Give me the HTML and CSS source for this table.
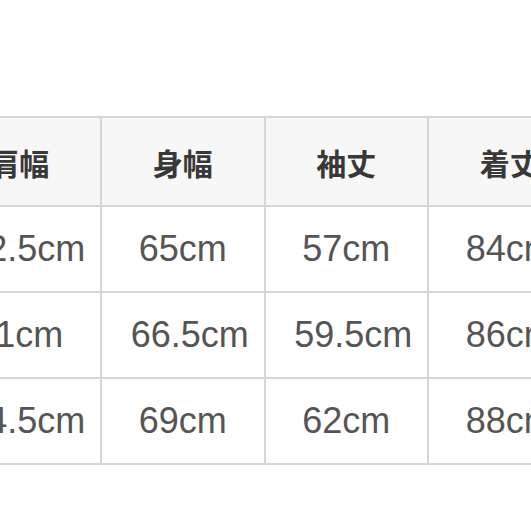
FILE: index.html
```html
<!DOCTYPE html>
<html lang="ja">
<head>
<meta charset="utf-8">
<link rel="stylesheet" href="styles.css">
</head>
<body>
<div class="page">
  <table class="size-table">
    <thead>
      <tr>
        <th>肩幅</th>
        <th>身幅</th>
        <th>袖丈</th>
        <th>着丈</th>
      </tr>
    </thead>
    <tbody>
      <tr>
        <td class="half">52.5cm</td>
        <td>65cm</td>
        <td>57cm</td>
        <td>84cm</td>
      </tr>
      <tr>
        <td>61cm</td>
        <td class="half">66.5cm</td>
        <td class="half">59.5cm</td>
        <td>86cm</td>
      </tr>
      <tr>
        <td class="half">64.5cm</td>
        <td>69cm</td>
        <td>62cm</td>
        <td>88cm</td>
      </tr>
    </tbody>
  </table>
</div>
</body>
</html>
```
FILE: styles.css
```css
html, body {
  margin: 0;
  padding: 0;
  background: #ffffff;
}
.page {
  width: 531px;
  height: 531px;
  overflow: hidden;
  padding-top: 116px;
  box-sizing: border-box;
}
.size-table {
  margin-left: -63.5px;
  border-collapse: separate;
  border-spacing: 0;
  table-layout: fixed;
  width: 656px;
  border-top: 2px solid #d6d6d6;
  border-left: 2px solid #d6d6d6;
}
.size-table th,
.size-table td {
  width: 161.5px;
  padding: 0;
  text-align: center;
  border-right: 2px solid #d6d6d6;
  border-bottom: 2px solid #d6d6d6;
  white-space: nowrap;
}
.size-table th {
  height: 87px;
  background: #f7f7f7;
  color: #383838;
  font-family: "Noto Sans CJK JP", "Noto Sans", sans-serif;
  font-weight: 700;
  font-size: 30px;
}
.size-table td {
  height: 84px;
  background: #ffffff;
  color: #555555;
  font-family: "Liberation Sans", Arial, sans-serif;
  font-weight: 400;
  font-size: 36px;
}
.size-table td.half {
  padding-left: 14px;
}
```
